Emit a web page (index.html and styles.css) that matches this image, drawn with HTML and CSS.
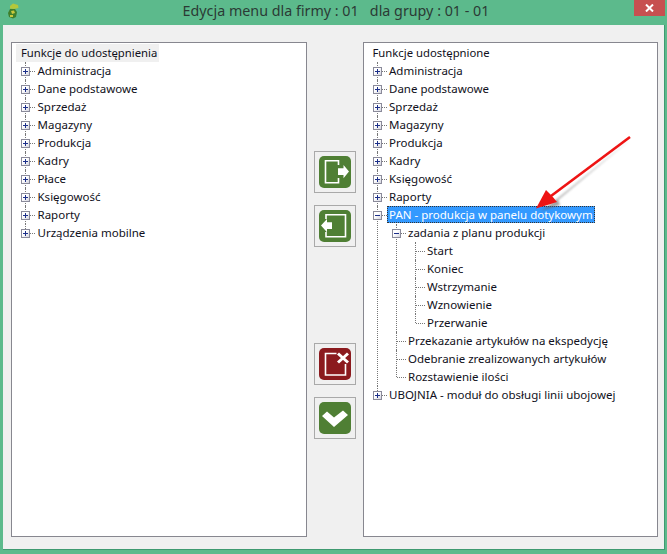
FILE: index.html
```html
<!DOCTYPE html>
<html lang="pl">
<head>
<meta charset="utf-8">
<title>Edycja menu</title>
<link rel="stylesheet" href="styles.css">
</head>
<body>
<div class="window">
  <header class="titlebar">
    <svg class="app-icon" width="12" height="16" viewBox="0 0 12 16">
      <path d="M3 3 L6 0.5 L11 2 L11.5 5 L7 6 L3 5.5 Z" fill="#b4c83a"/>
      <path d="M3 6 L8 6 L10 9 L9 14 L6 15.5 L2 14 L1 10 Z" fill="#3f7f2c"/>
      <path d="M4 8 L7 7.5 L8 10 L5 11 Z M3 12 L6 12 L6 14 L3 14 Z" fill="#c9c83c"/>
    </svg>
    <div class="title">Edycja menu dla firmy : 01&nbsp;&nbsp; dla grupy : 01 - 01</div>
    <div class="close">
      <svg width="9" height="8" viewBox="0 0 9 8"><path d="M1 0.5 L8 7.5 M8 0.5 L1 7.5" stroke="#fff" stroke-width="2"/></svg>
    </div>
  </header>
  <main class="client">
    <section class="panel">
      <div class="root-label">Funkcje do udostępnienia</div>
      <ul class="tree">
        <li class="item"><div class="row"><span class="box plus"></span><span class="label">Administracja</span></div></li>
        <li class="item"><div class="row"><span class="box plus"></span><span class="label">Dane podstawowe</span></div></li>
        <li class="item"><div class="row"><span class="box plus"></span><span class="label">Sprzedaż</span></div></li>
        <li class="item"><div class="row"><span class="box plus"></span><span class="label">Magazyny</span></div></li>
        <li class="item"><div class="row"><span class="box plus"></span><span class="label">Produkcja</span></div></li>
        <li class="item"><div class="row"><span class="box plus"></span><span class="label">Kadry</span></div></li>
        <li class="item"><div class="row"><span class="box plus"></span><span class="label">Płace</span></div></li>
        <li class="item"><div class="row"><span class="box plus"></span><span class="label">Księgowość</span></div></li>
        <li class="item"><div class="row"><span class="box plus"></span><span class="label">Raporty</span></div></li>
        <li class="item"><div class="row"><span class="box plus"></span><span class="label">Urządzenia mobilne</span></div></li>
      </ul>
    </section>
    <nav class="actions">
      <button class="action"><svg width="32" height="32" viewBox="0 0 32 32"><rect width="32" height="32" rx="5" fill="#4f7f34"/><path d="M19.5 9 V4.8 H6.5 V26.8 H19.5 V22" fill="none" stroke="#fff" stroke-width="1.6"/><path d="M19 12.3 H24.5 V9 L30 15.6 L24.5 22.2 V19 H19 Z" fill="#fff"/></svg></button>
      <button class="action"><svg width="32" height="32" viewBox="0 0 32 32"><rect width="32" height="32" rx="5" fill="#4f7f34"/><path d="M7 9 V4.8 H26.5 V26.8 H7 V22" fill="none" stroke="#fff" stroke-width="1.6"/><path d="M13 12.3 H8 V9 L2 15.6 L8 22.2 V19 H13 Z" fill="#fff"/></svg></button>
      <button class="action action-far"><svg width="32" height="32" viewBox="0 0 32 32"><rect width="32" height="32" rx="5" fill="#8b1a1e"/><path d="M17.5 5.5 H6.5 V27 H26.5 V16" fill="none" stroke="#fff" stroke-width="1.6"/><path d="M19 5.5 L29 14.5 M29 5.5 L19 14.5" fill="none" stroke="#fff" stroke-width="3"/></svg></button>
      <button class="action"><svg width="32" height="32" viewBox="0 0 32 32"><rect width="32" height="32" rx="5" fill="#4f7f34"/><path d="M3 14 L8 9.5 L15 15.5 L24 8.5 L29 13 L15 25 Z" fill="#fff"/></svg></button>
    </nav>
    <section class="panel">
      <div class="root-label root-plain">Funkcje udostępnione</div>
      <ul class="tree">
        <li class="item"><div class="row"><span class="box plus"></span><span class="label">Administracja</span></div></li>
        <li class="item"><div class="row"><span class="box plus"></span><span class="label">Dane podstawowe</span></div></li>
        <li class="item"><div class="row"><span class="box plus"></span><span class="label">Sprzedaż</span></div></li>
        <li class="item"><div class="row"><span class="box plus"></span><span class="label">Magazyny</span></div></li>
        <li class="item"><div class="row"><span class="box plus"></span><span class="label">Produkcja</span></div></li>
        <li class="item"><div class="row"><span class="box plus"></span><span class="label">Kadry</span></div></li>
        <li class="item"><div class="row"><span class="box plus"></span><span class="label">Księgowość</span></div></li>
        <li class="item"><div class="row"><span class="box plus"></span><span class="label">Raporty</span></div></li>
        <li class="item">
          <div class="row"><span class="box minus"></span><span class="label selected">PAN - produkcja w panelu dotykowym</span></div>
          <ul class="tree nested">
            <li class="item">
              <div class="row"><span class="box minus"></span><span class="label">zadania z planu produkcji</span></div>
              <ul class="tree nested">
                <li class="item"><div class="row"><span class="stub"></span><span class="label">Start</span></div></li>
                <li class="item"><div class="row"><span class="stub"></span><span class="label">Koniec</span></div></li>
                <li class="item"><div class="row"><span class="stub"></span><span class="label">Wstrzymanie</span></div></li>
                <li class="item"><div class="row"><span class="stub"></span><span class="label">Wznowienie</span></div></li>
                <li class="item"><div class="row"><span class="stub"></span><span class="label">Przerwanie</span></div></li>
              </ul>
            </li>
            <li class="item"><div class="row"><span class="stub"></span><span class="label">Przekazanie artykułów na ekspedycję</span></div></li>
            <li class="item"><div class="row"><span class="stub"></span><span class="label">Odebranie zrealizowanych artykułów</span></div></li>
            <li class="item"><div class="row"><span class="stub"></span><span class="label">Rozstawienie ilości</span></div></li>
          </ul>
        </li>
        <li class="item"><div class="row"><span class="box plus"></span><span class="label">UBOJNIA - moduł do obsługi linii ubojowej</span></div></li>
      </ul>
    </section>
  </main>
  <svg class="arrow" width="110" height="85" viewBox="0 0 110 85">
    <defs><filter id="soft" x="-20%" y="-20%" width="140%" height="140%"><feGaussianBlur stdDeviation="1"/></filter></defs>
    <path d="M106 9 L32 69 L16 81 L35 75 L33 70 Z" fill="#666" opacity=".6" filter="url(#soft)"/>
    <path d="M105 7 L26 66" stroke="#ee1414" stroke-width="2.6"/>
    <path d="M11 78.5 L21 60 L27 66 L32 72 Z" fill="#ee1414"/>
  </svg>
</div>
</body>
</html>
```
FILE: styles.css
```css
* { box-sizing: border-box; }
html, body { margin: 0; padding: 0; }
body {
  width: 667px;
  height: 554px;
  overflow: hidden;
  background: #5cba8c;
  font-family: "Noto Sans", "Open Sans", sans-serif;
  font-size: 11.5px;
  color: #101020;
}
.window {
  position: relative;
  width: 667px;
  height: 554px;
  padding: 0 2px 4px 3px;
  display: flex;
  flex-direction: column;
}
.titlebar {
  height: 25px;
  display: flex;
  align-items: flex-start;
  margin-left: -3px;
  margin-right: -2px;
  padding: 0 2px 0 7px;
}
.app-icon { margin-top: 3px; flex: none; }
.title {
  flex: 1;
  margin-top: 1px;
  font-size: 14.3px;
  line-height: 20px;
  text-align: center;
  color: #2b3a35;
  padding-left: 19px;
}
.close {
  width: 31px;
  height: 16px;
  background: #c75050;
  display: flex;
  align-items: center;
  justify-content: center;
  flex: none;
}
.client {
  flex: 1;
  background: #f0f0f0;
  border-right: 1px solid #3f9a70;
  border-bottom: 1px solid #3f9a70;
  padding: 17px 6px 12px 8px;
  display: flex;
}
.panel {
  flex: 1;
  background: #fff;
  border: 1px solid #87878f;
  padding: 1px 0 0 9px;
}
.root-label {
  width: max-content;
  height: 18px;
  font-size: 11.3px;
  line-height: 17px;
  margin-left: -5px;
  padding: 0 2px 0 5px;
  background: #f0f0f0;
}
.root-plain { background: none; }
.actions {
  width: 56px;
  flex: none;
  padding: 109px 7px 0 7px;
  display: flex;
  flex-direction: column;
  gap: 12px;
}
.action {
  width: 42px;
  height: 42px;
  padding: 0;
  background: #f0f0f0;
  border: 1px solid #a9a9a9;
  display: flex;
  align-items: center;
  justify-content: center;
}
.action-far { margin-top: 84px; }
.tree { list-style: none; margin: 0; padding: 0; }
.nested { margin-left: 19px; }
.item { position: relative; }
.item::before {
  content: "";
  position: absolute;
  left: 4px;
  top: 0;
  bottom: 0;
  border-left: 1px dotted #777;
}
.item:last-child::before { bottom: auto; height: 9px; }
.row {
  height: 18px;
  display: flex;
  align-items: center;
  position: relative;
}
.box {
  position: relative;
  width: 9px;
  height: 9px;
  flex: none;
  margin-top: 1px;
  background: linear-gradient(135deg, #fff 40%, #d4d4de);
  border: 1px solid #8a8a9a;
}
.box::before {
  content: "";
  position: absolute;
  left: 1px;
  top: 3px;
  width: 5px;
  height: 1px;
  background: #1c2f8a;
}
.plus::after {
  content: "";
  position: absolute;
  left: 3px;
  top: 1px;
  width: 1px;
  height: 5px;
  background: #1c2f8a;
}
.stub {
  width: 9px;
  flex: none;
}
.row::before {
  content: "";
  position: absolute;
  left: 5px;
  width: 9px;
  top: 9px;
  border-top: 1px dotted #777;
}
.label {
  position: relative;
  margin-left: 5px;
  margin-bottom: 1px;
  padding: 0 2px 0 2.5px;
  line-height: 17px;
  height: 17px;
  white-space: nowrap;
}
.selected {
  background: #3399ff;
  color: #fff;
  outline: 1px dotted #333;
  outline-offset: -1px;
}
.arrow { position: absolute; left: 525px; top: 130px; }
```
